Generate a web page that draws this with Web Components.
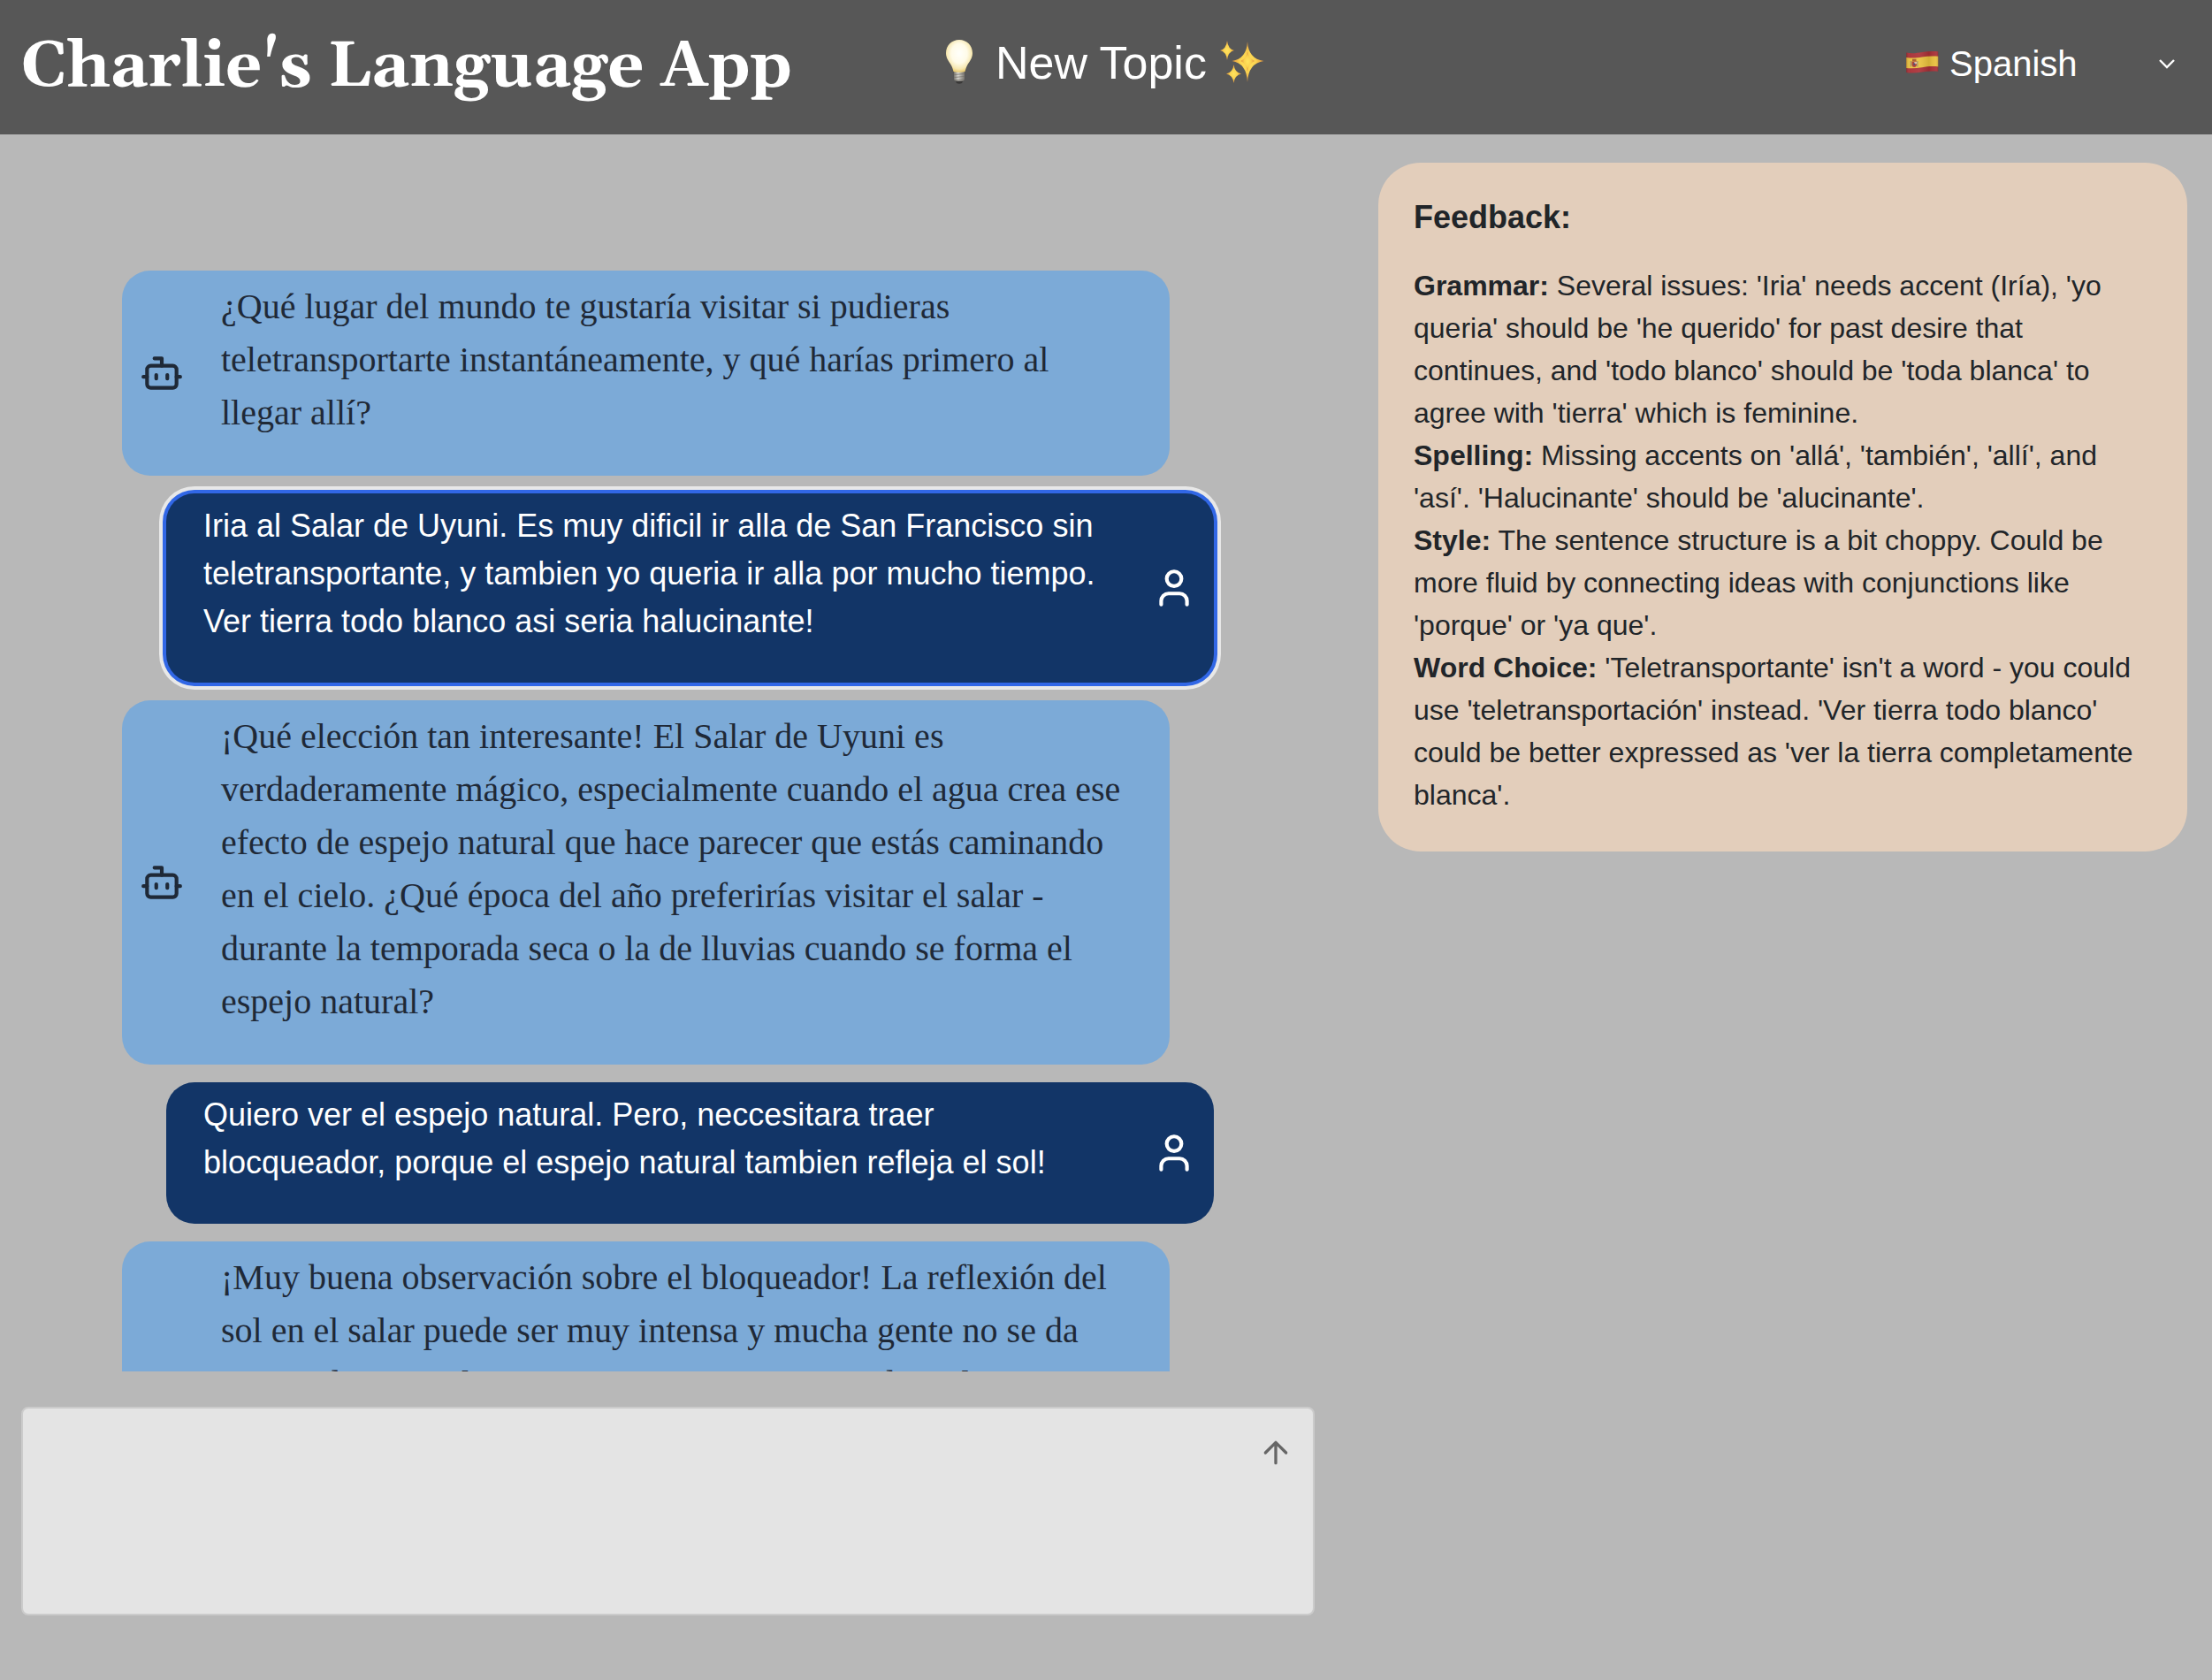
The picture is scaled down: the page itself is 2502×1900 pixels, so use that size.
<!DOCTYPE html>
<html lang="es">
<head>
<meta charset="utf-8">
<title>Charlie's Language App</title>
<style>
html,body{margin:0;height:100%}
body{background:#b8b8b8;font-family:"Liberation Sans",Arial,sans-serif;overflow:hidden}
</style>
</head>
<body>
<language-app></language-app>
<script>
class BaseElement extends HTMLElement {
  connectedCallback() {
    if (this.shadowRoot) return;
    this.attachShadow({ mode: 'open' }).innerHTML = this.render();
  }
}

const ICONS = {
  bot: '<path d="M12 8V4H8"/><rect width="16" height="12" x="4" y="8" rx="2"/><path d="M2 14h2M20 14h2M15 13v2M9 13v2"/>',
  user: '<path d="M19 21v-2a4 4 0 0 0-4-4H9a4 4 0 0 0-4 4v2"/><circle cx="12" cy="7" r="4"/>',
  send: '<path d="m5 12 7-7 7 7M12 19V5"/>'
};
customElements.define('line-icon', class extends BaseElement {
  render() {
    const size = this.getAttribute('size');
    return `<style>:host{display:block;flex:none;width:${size}px;height:${size}px}svg{display:block}</style>
    <svg width="${size}" height="${size}" viewBox="0 0 24 24" fill="none" stroke="currentColor" stroke-width="2" stroke-linecap="round" stroke-linejoin="round">${ICONS[this.getAttribute('name')]}</svg>`;
  }
});

const EMOJI = {
  bulb: [30, 50, `<defs><radialGradient id="b" cx=".5" cy=".42" r=".6"><stop offset="0" stop-color="#fffffb"/><stop offset=".5" stop-color="#fffbe8"/><stop offset=".8" stop-color="#f6e7b0"/><stop offset="1" stop-color="#e6c35f"/></radialGradient>
    <linearGradient id="m"><stop offset="0" stop-color="#77756f"/><stop offset=".4" stop-color="#dddbd4"/><stop offset="1" stop-color="#77746e"/></linearGradient></defs>
    <path d="M10 45h10l-2 4q-3 1.600-6 0z" fill="#393837"/><path d="M9 36h12v8q0 2-2 2.500h-8q-2-.5-2-2.500z" fill="url(#m)"/><path d="M9 39.500l12-1M9 42.500l12-1M10 45.500l10-1" stroke="#77736b" stroke-width=".8"/>
    <path d="M15 0C6.500 0 0 6.500 0 15c0 6 3.500 9.500 6 14 1.500 3 2 5 2.500 7q6.500 1.500 13 0c.5-2 1-4 2.500-7 2.500-4.500 6-8 6-14C30 6.500 23.500 0 15 0z" fill="url(#b)"/>`],
  sparkles: [50, 48, `<defs><radialGradient id="s"><stop offset="0" stop-color="#ffe45f"/><stop offset=".5" stop-color="#fbd24f"/><stop offset="1" stop-color="#e0913d"/></radialGradient></defs>
    <g fill="url(#s)"><path d="M31 1Q32 20.500 49.500 23 32 25.500 31 47 30 25.500 13.500 23 30 20.500 31 1z"/><path d="M31 12Q33 20.500 39 23 33 25.500 31 35 29 25.500 23.500 23 29 20.500 31 12z"/>
    <path d="M8 0Q9 9.500 16 11 9 12.500 8 22 7 12.500 0 11 7 9.500 8 0z"/><path d="M15.500 27Q16.500 36 24 37.500 16.500 39 15.500 48 14.500 39 7 37.500 14.500 36 15.500 27z"/></g>`],
  flag: [37, 27, `<defs><clipPath id="c"><path d="M.3 2.500C7 4 12 3 18 2S30 .8 36.200 1.200V23.800C30 23 24 23.500 18 24.500S6 26 .3 25z"/></clipPath><linearGradient id="l"><stop offset="0" stop-color="#000" stop-opacity=".2"/><stop offset=".12" stop-color="#fff" stop-opacity=".04"/><stop offset=".4" stop-color="#fff" stop-opacity=".08"/><stop offset=".7" stop-color="#000" stop-opacity=".1"/><stop offset=".9" stop-color="#fff" stop-opacity=".05"/><stop offset="1" stop-color="#000" stop-opacity=".25"/></linearGradient></defs>
    <g clip-path="url(#c)"><path d="M0 0h37v27H0z" fill="#a92f36"/><path d="M0 8C7 9 12 8.500 18 7.500S30 6.400 37 6.800V18.500C30 17.600 24 18.200 18 19.200S6 20.600 0 20z" fill="#e9c13d"/>
    <path d="M4.700 12h1.200v6.500H4.700zM12.300 12h1.200v6.500h-1.200z" fill="#9a8d68"/><path d="M6.500 12.500H12v4q-.5 2.500-2.800 2.500T6.500 16.500z" fill="#a63a34"/><path d="M7 9.800h4.500v2.400H7z" fill="#a8592b"/><path d="M9.300 13H12v2.200H9.300z" fill="#d9b9a3"/><circle cx="9.200" cy="15.500" r="1" fill="#35467c"/><path d="M0 0h37v27H0z" fill="url(#l)"/></g>`]
};
customElements.define('emoji-glyph', class extends BaseElement {
  render() {
    const [w, h, art] = EMOJI[this.getAttribute('name')];
    return `<style>:host{display:block;flex:none;width:${w}px;height:${h}px}svg{display:block}</style>
    <svg width="${w}" height="${h}" viewBox="0 0 ${w} ${h}">${art}</svg>`;
  }
});

customElements.define('app-header', class extends BaseElement {
  render() {
    return `<style>
    :host{display:flex;flex:none;height:152px;background:#575757;color:#fff;align-items:flex-start;box-sizing:border-box;padding:0 42px 0 24px;white-space:nowrap}
    h1{margin:30px 0 0;width:1046px;font:bold 72px/92px Georgia,Gelasio,"Liberation Serif",serif}
    .topic{display:flex;align-items:flex-start;font-size:52px;line-height:60px;width:1086px}
    .topic span{margin:41px 15px 0 26px}
    .topic emoji-glyph{margin-top:45px}.topic span+emoji-glyph{margin-top:46px}
    .lang{display:flex;flex:1;align-items:flex-start;font-size:40px;line-height:46px}
    .lang emoji-glyph{margin-top:57px}.lang span{margin:49px 0 0 12px}
    .lang svg{display:block;margin:66px 0 0 auto}
    </style>
    <h1>Charlie's Language App</h1>
    <div class="topic"><emoji-glyph name="bulb"></emoji-glyph><span>New Topic</span><emoji-glyph name="sparkles"></emoji-glyph></div>
    <div class="lang"><emoji-glyph name="flag"></emoji-glyph><span>Spanish</span>
    <svg width="18" height="13" viewBox="0 0 18 13" fill="none" stroke="#fff" stroke-width="2.400"><path d="M1 2l8 8 8-8"/></svg></div>`;
  }
});

customElements.define('chat-message', class extends BaseElement {
  render() {
    return `<style>
    :host{display:flex;flex:none;align-items:center;box-sizing:border-box;width:1185px;padding:10px 20px 42px;border-radius:32px;white-space:nowrap;
      background:#7caad7;color:#1f2937;font:40px/60px "Liberation Serif","Times New Roman",serif}
    :host([from=bot]){gap:42px;padding-top:11px;padding-bottom:41px}
    :host([from=bot]) line-icon{margin-bottom:-30px}
    :host([from=user]){margin-left:50px;padding-left:42px;justify-content:space-between;background:#123567;color:#fff;font:36px/54px "Liberation Sans",Arial,sans-serif}
    :host([selected]){box-shadow:0 0 0 4px #3167e6,0 0 0 8px #e8e8e8}
    :host([tall]){min-height:412px}
    div{align-self:flex-start}
    line-icon{margin-bottom:-32px}
    </style>` + (this.getAttribute('from') === 'bot'
      ? '<line-icon name="bot" size="50"></line-icon><div><slot></slot></div>'
      : '<div><slot></slot></div><line-icon name="user" size="50"></line-icon>');
  }
});

customElements.define('chat-list', class extends BaseElement {
  render() {
    return `<style>:host{display:flex;flex-direction:column;gap:20px;box-sizing:border-box;height:1399px;padding:154px 0 0 138px;overflow:hidden}</style><slot></slot>`;
  }
});

customElements.define('message-input', class extends BaseElement {
  render() {
    return `<style>:host{display:flex;justify-content:flex-end;align-items:flex-start;box-sizing:border-box;width:1463px;height:236px;margin:40px 0 0 24px;padding:30px 22px;border:2px solid #cbcbcb;border-radius:8px;background:#e4e4e4;color:#666}</style>
    <line-icon name="send" size="40"></line-icon>`;
  }
});

customElements.define('feedback-card', class extends BaseElement {
  render() {
    return `<style>
    :host{display:block;box-sizing:border-box;width:915px;padding:40px;border-radius:48px;background:#e3cebb;color:#212529;font-size:32px;line-height:48px;white-space:nowrap}
    h2{margin:0 0 32px;font-size:36px;line-height:43px}
    </style><h2>Feedback:</h2><slot></slot>`;
  }
});

customElements.define('language-app', class extends BaseElement {
  render() {
    return `<style>
    :host{display:flex;flex-direction:column;height:100%}
    main{display:flex;align-items:flex-start}
    section{width:1559px;flex:none}
    aside{padding-top:32px}
    </style>
    <app-header></app-header>
    <main>
      <section>
        <chat-list>
          <chat-message from="bot">¿Qué lugar del mundo te gustaría visitar si pudieras<br>teletransportarte instantáneamente, y qué harías primero al<br>llegar allí?</chat-message>
          <chat-message from="user" selected>Iria al Salar de Uyuni. Es muy dificil ir alla de San Francisco sin<br>teletransportante, y tambien yo queria ir alla por mucho tiempo.<br>Ver tierra todo blanco asi seria halucinante!</chat-message>
          <chat-message from="bot">¡Qué elección tan interesante! El Salar de Uyuni es<br>verdaderamente mágico, especialmente cuando el agua crea ese<br>efecto de espejo natural que hace parecer que estás caminando<br>en el cielo. ¿Qué época del año preferirías visitar el salar -<br>durante la temporada seca o la de lluvias cuando se forma el<br>espejo natural?</chat-message>
          <chat-message from="user">Quiero ver el espejo natural. Pero, neccesitara traer<br>blocqueador, porque el espejo natural tambien refleja el sol!</chat-message>
          <chat-message from="bot" tall>¡Muy buena observación sobre el bloqueador! La reflexión del<br>sol en el salar puede ser muy intensa y mucha gente no se da<br>cuenta de este peligro. Una pregunta, si se puede en la zona</chat-message>
        </chat-list>
        <message-input></message-input>
      </section>
      <aside>
        <feedback-card><b>Grammar:</b> Several issues: 'Iria' needs accent (Iría), 'yo<br>queria' should be 'he querido' for past desire that<br>continues, and 'todo blanco' should be 'toda blanca' to<br>agree with 'tierra' which is feminine.<br><b>Spelling:</b> Missing accents on 'allá', 'también', 'allí', and<br>'así'. 'Halucinante' should be 'alucinante'.<br><b>Style:</b> The sentence structure is a bit choppy. Could be<br>more fluid by connecting ideas with conjunctions like<br>'porque' or 'ya que'.<br><b>Word Choice:</b> 'Teletransportante' isn't a word - you could<br>use 'teletransportación' instead. 'Ver tierra todo blanco'<br>could be better expressed as 'ver la tierra completamente<br>blanca'.</feedback-card>
      </aside>
    </main>`;
  }
});
</script>
</body>
</html>
